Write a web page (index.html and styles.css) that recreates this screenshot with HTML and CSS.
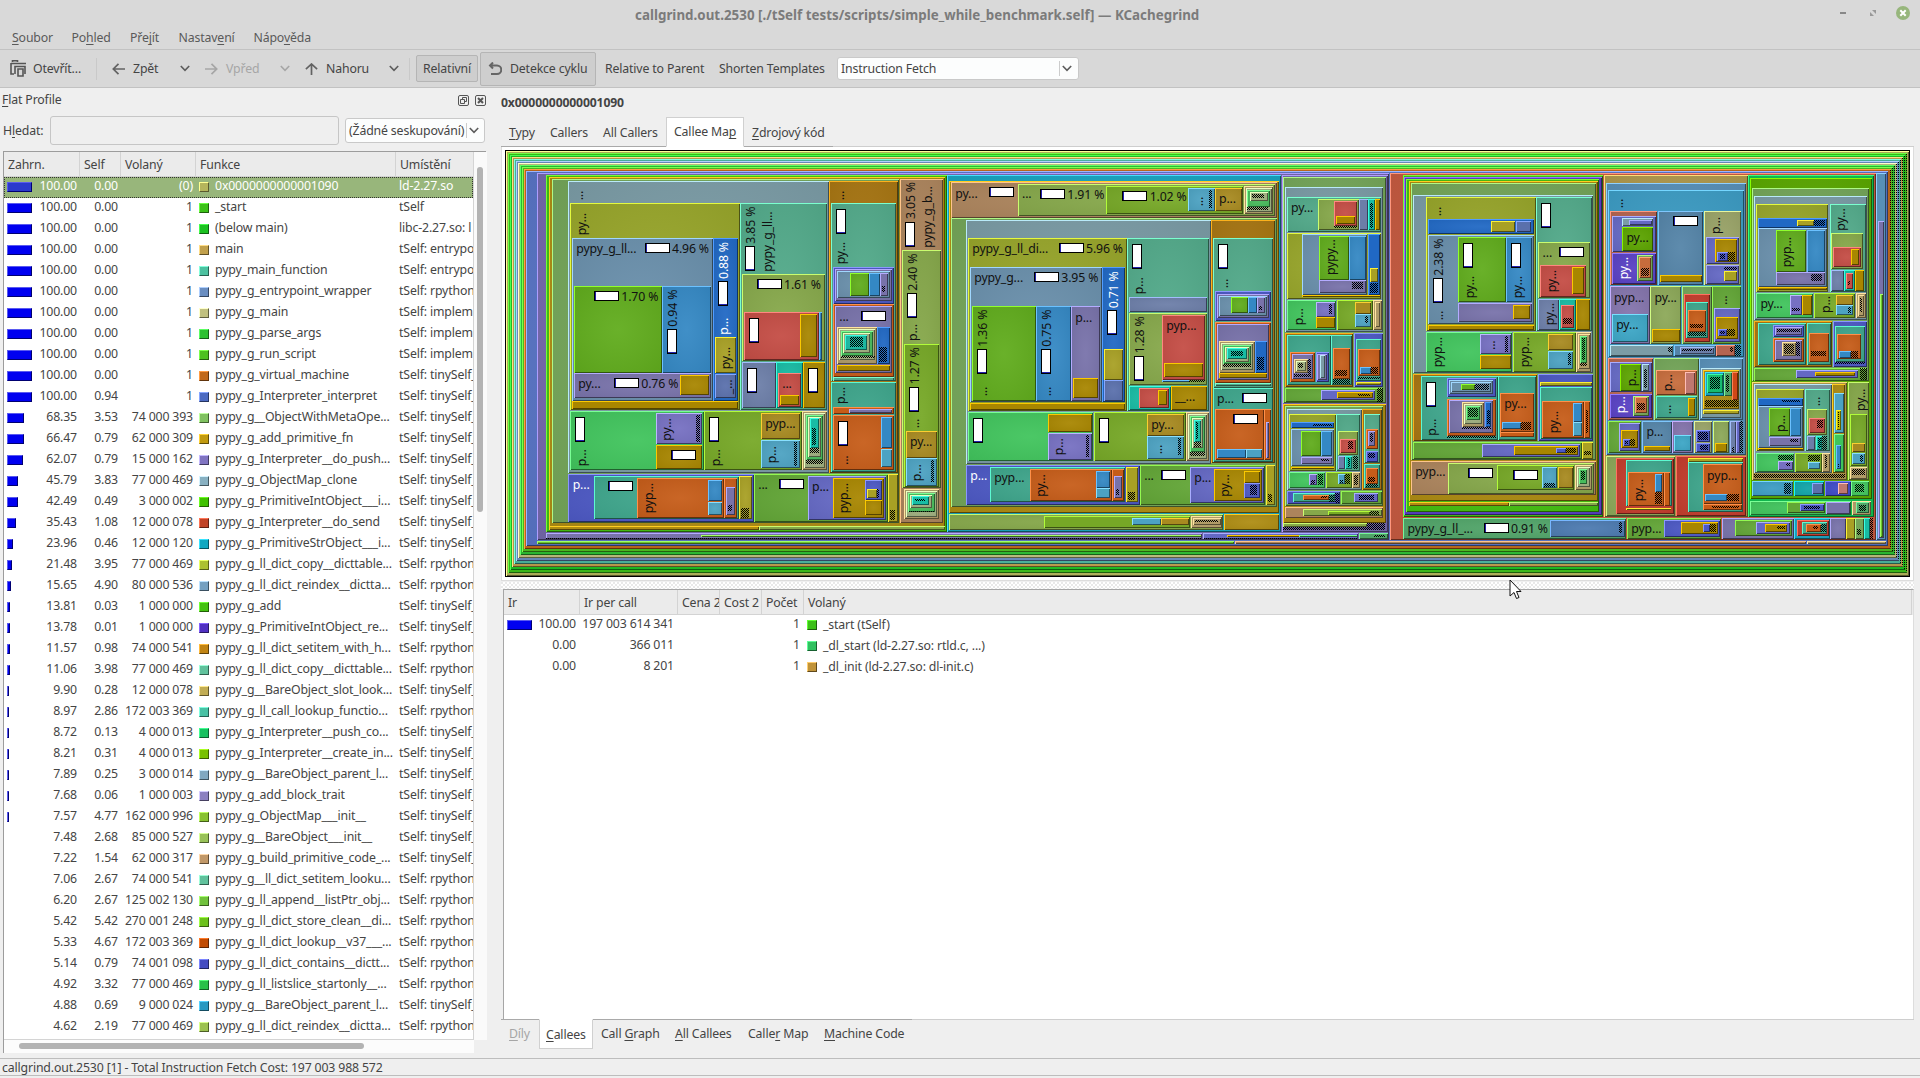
FILE: index.html
```html
<!DOCTYPE html>
<html lang="cs">
<head>
<meta charset="utf-8">
<title>callgrind.out.2530 — KCachegrind</title>
<link rel="stylesheet" href="styles.css">
</head>
<body>
<div class="window">
  <header class="titlebar">
    <h1>callgrind.out.2530 [./tSelf tests/scripts/simple_while_benchmark.self] — KCachegrind</h1>
    <svg class="controls" width="80" height="16" viewBox="0 0 80 16">
      <path d="M5 7h6v2H5z" fill="#888"/>
      <path d="M37 5h4v4zM35 7v4h4z" fill="#999"/>
      <circle cx="68" cy="8" r="7" fill="#97b67c"/>
      <path d="M65.300 5.300l5.400 5.400M70.700 5.300l-5.400 5.400" stroke="#fff" stroke-width="2"/>
    </svg>
  </header>
  <nav class="menubar">
    <span><u>S</u>oubor</span><span>Po<u>h</u>led</span><span>Pře<u>j</u>ít</span><span>Nastav<u>e</u>ní</span><span>Nápo<u>v</u>ěda</span>
  </nav>
  <div class="toolbar">
    <span class="tool open"><svg width="17" height="17" viewBox="0 0 17 17" fill="none" stroke="#555"><path d="M2.500 2V.8h5V2M1 3.500h15M1 3v11h3" stroke-width="1.600"/><path d="M5 14V6.500h10V14" stroke-width="1.600"/><path d="M8 9h5v7H8z" stroke-width="1.600"/></svg>Otevřít...</span>
    <i class="sep"></i>
    <span class="tool back"><svg width="13" height="12" viewBox="0 0 13 12"><path d="M6.500 .8L1.300 6l5.200 5.200M1.500 6H13"/></svg>Zpět</span>
    <svg class="chev c1" width="10" height="7" viewBox="0 0 10 7"><path d="M.8 1L5 5.400 9.200 1"/></svg>
    <span class="tool fwd"><svg width="13" height="12" viewBox="0 0 13 12"><path d="M6.500 .8L11.700 6l-5.200 5.200M0 6h11.500"/></svg>Vpřed</span>
    <svg class="chev c2" width="10" height="7" viewBox="0 0 10 7"><path d="M.8 1L5 5.400 9.200 1"/></svg>
    <span class="tool up"><svg width="13" height="12" viewBox="0 0 13 12"><path d="M.9 6.200L6.500 1l5.600 5.200M6.500 1.200V12"/></svg>Nahoru</span>
    <svg class="chev c3" width="10" height="7" viewBox="0 0 10 7"><path d="M.8 1L5 5.400 9.200 1"/></svg>
    <i class="sep"></i>
    <span class="btn rel">Relativní</span>
    <span class="btn cycle"><svg width="14" height="14" viewBox="0 0 14 14" fill="none" stroke="#666" stroke-width="2"><path d="M2 3.500h7a4.200 4.200 0 0 1 0 8.500H3M5 .5L2 3.500l3 3"/></svg>Detekce cyklu</span>
    <span class="tool parent">Relative to Parent</span>
    <span class="tool shorten">Shorten Templates</span>
    <span class="combo event"><b>Instruction Fetch</b><svg class="chev" width="10" height="7" viewBox="0 0 10 7"><path d="M.8 1L5 5.400 9.200 1"/></svg></span>
  </div>
  <main class="body">
    <aside class="dock">
      <div class="dock-title"><span><u>F</u>lat Profile</span>
        <svg width="28" height="11" viewBox="0 0 28 11" fill="none" stroke="#555"><rect x=".5" y=".5" width="10" height="10" rx="1.500"/><path d="M4.500 4.500V2.500h4v4h-2M2.500 4.500h4v4h-4z"/><rect x="17.500" y=".5" width="10" height="10" rx="1.500"/><path d="M20 3l5 5M25 3l-5 5" stroke-width="2"/></svg>
      </div>
      <div class="search"><label>H<u>l</u>edat:</label><span class="input"></span><span class="combo group"><b>(Žádné seskupování)</b><svg class="chev" width="10" height="7" viewBox="0 0 10 7"><path d="M.8 1L5 5.400 9.200 1"/></svg></span></div>
      <div class="profile">
        <div class="list">
          <div class="row head"><span>Zahrn.</span><span>Self</span><span>Volaný</span><span>Funkce</span><span>Umístění</span></div>
          <div id="functions"></div>
        </div>
        <div class="vscroll"><i></i></div>
        <div class="hscroll"><i></i></div>
        <div class="corner"></div>
      </div>
    </aside>
    <section class="detail">
      <h2>0x0000000000001090</h2>
      <div class="tabs top"><span class="t1"><u>T</u>ypy</span><span class="t2">Callers</span><span class="t3">All Callers</span><span class="t4 active">Callee Ma<u>p</u></span><span class="t5"><u>Z</u>drojový kód</span></div>
      <div class="mapframe"><svg id="map" width="1405" height="427" viewBox="505 150 1405 427"></svg></div>
      <div class="splitter"></div>
      <div class="callees">
        <div class="crow chead"><span>Ir</span><span>Ir per call</span><span>Cena 2</span><span>Cost 2</span><span>Počet</span><span>Volaný</span></div>
        <div class="crow"><span class="num"><i class="bar w25"></i>100.00</span><span class="num">197 003 614 341</span><span></span><span></span><span class="num">1</span><span class="fn"><i class="sw s1"></i>_start (tSelf)</span></div>
        <div class="crow"><span class="num">0.00</span><span class="num">366 011</span><span></span><span></span><span class="num">1</span><span class="fn"><i class="sw s2"></i>_dl_start (ld-2.27.so: rtld.c, ...)</span></div>
        <div class="crow"><span class="num">0.00</span><span class="num">8 201</span><span></span><span></span><span class="num">1</span><span class="fn"><i class="sw s3"></i>_dl_init (ld-2.27.so: dl-init.c)</span></div>
      </div>
      <div class="tabs bottom"><span class="b1"><u>D</u>íly</span><span class="b2 active"><u>C</u>allees</span><span class="b3">Call <u>G</u>raph</span><span class="b4"><u>A</u>ll Callees</span><span class="b5">Calle<u>r</u> Map</span><span class="b6"><u>M</u>achine Code</span></div>
    </section>
  </main>
  <footer class="status">callgrind.out.2530 [1] - Total Instruction Fetch Cost: 197 003 988 572</footer>
  <svg class="pointer" width="13" height="21" viewBox="0 0 13 21"><path d="M1 1v16l4-3.500 2.500 6 2.500-1-2.500-6H12z" fill="#fff" stroke="#111"/></svg>
</div>
<script src="script.js"></script>
</body>
</html>
```
FILE: styles.css
```css
* { box-sizing: border-box; }
body { margin: 0; background: #efefef; color: #444; font: 12.3px/18px "Noto Sans", sans-serif; letter-spacing: -.15px; overflow: hidden; }
u { text-decoration: underline; text-underline-offset: 2px; text-decoration-thickness: 1px; text-decoration-skip-ink: none; }
.window { position: relative; width: 1920px; height: 1078px; display: flex; flex-direction: column; }
.titlebar { height: 28px; background: #d9d9d9; display: flex; align-items: center; padding-left: 635px; }
.titlebar h1 { margin: 2px 0 0; font-size: 13.33px; font-weight: 700; line-height: 18px; letter-spacing: .03px; color: #7b7b7b; white-space: nowrap; }
.controls { margin: 0 5px 2px auto; }
.menubar { height: 22px; background: #d9d9d9; border-bottom: 1px solid #c2c2c2; display: grid; grid-template-columns: 59.5px 58.5px 48.5px 75px 80px; padding: 1px 0 0 12px; color: #5a5a5a; }
.toolbar { height: 38px; background: #d8d8d8; border-bottom: 1px solid #c2c2c2; display: flex; align-items: center; white-space: nowrap; }
.toolbar > * { flex: none; }
.tool, .btn { display: flex; align-items: center; }
.tool svg, .btn svg { flex: none; }
.open { width: 96px; padding-left: 10px; gap: 6px; }
.sep { width: 1px; height: 22px; background: #c9c9c9; }
.back { width: 83px; padding-left: 15px; gap: 8px; }
.fwd { width: 75px; margin-left: 15px; gap: 8px; color: #a6a6a6; }
.up { width: 84px; margin-left: 15px; gap: 8px; }
.back path, .up path, .fwd path { fill: none; stroke: #636363; stroke-width: 1.700; }
.fwd path, .c2 path { stroke: #a6a6a6 !important; }
.chev path { fill: none; stroke: #5c5c5c; stroke-width: 1.600; }
.c3 { margin-right: 10px; }
.btn { background: #cecece; border: 1px solid #b5b5b5; border-radius: 2px; }
.rel { width: 62px; height: 27px; margin-left: 6px; justify-content: center; }
.cycle { width: 116px; height: 34px; margin-left: 2px; padding-left: 7px; gap: 8px; }
.parent { width: 114px; margin-left: 9px; }
.shorten { width: 118px; }
.combo { display: flex; align-items: center; justify-content: space-between; background: #fcfdfd; border: 1px solid #c9c9c9; border-radius: 3px; padding: 0 6px 0 3px; white-space: nowrap; }
.combo b { font-weight: 400; }
.combo .chev { flex: none; box-sizing: content-box; border-left: 1px solid #ccc; padding: 4px 0 4px 2px; }
.event { width: 242px; height: 23px; }
.body { height: 970px; display: flex; }
.dock { width: 486px; flex: none; }
.dock-title { height: 24px; display: flex; align-items: center; justify-content: space-between; padding: 0 0 0 2px; }
.dock-title svg { margin-top: 1px; }
.search { height: 39px; display: flex; align-items: center; padding: 0 0 2px 3px; }
.search label { width: 47px; }
.input { width: 289px; height: 29px; border: 1px solid #c6c6c6; border-radius: 3px; margin-right: 6px; }
.group { width: 140px; height: 25px; padding: 0 5px 0 3px; }
.profile { width: 483px; height: 902px; margin-left: 3px; display: grid; grid-template: 888px 13px / 470px 13px; border-top: 1px solid #9c9c9c; border-left: 1px solid #9c9c9c; }
.list { background: #fff; overflow: hidden; border-bottom: 1px solid #d4d4d4; border-right: 1px solid #d4d4d4; }
.row { display: grid; grid-template-columns: 76px 41px 75px 200px 78px; height: 21px; line-height: 17px; white-space: nowrap; }
.row > span { overflow: hidden; height: 21px; }
.head.row, .head.row > span { height: 25px; background: #ebebeb; }
.head > span { border-right: 1px solid #d3d3d3; border-bottom: 1px solid #d3d3d3; padding: 4px 0 0 4px; }
.num { position: relative; text-align: right; padding-right: 3px; }
.bar { position: absolute; left: 3px; top: 5px; height: 10px; background: #0000f0; border: 1px solid; border-color: #5a5af0 #000070 #000070 #5a5af0; }
.w25 { width: 25px; }
.fn { display: flex; }
.sw { flex: none; width: 10px; height: 10px; margin: 5px 6px 0 3px; border: 1px solid; }
.loc { padding-left: 3px; }
.selected { background: #98b67b; color: #fff; outline: 1px dotted #333; outline-offset: -1px; }
.selected .bar { background: #2b39cc; }
.vscroll { background: #fafafa; padding: 15px 0 0 3px; }
.vscroll i { display: block; width: 6px; height: 345px; border-radius: 3px; background: #b3b3b3; }
.hscroll { background: #fcfcfc; padding: 3px 0 0 15px; }
.hscroll i { display: block; width: 345px; height: 6px; border-radius: 3px; background: #b3b3b3; }
.corner { background: #efefef; }
.detail { margin-left: 15px; width: 1413px; }
.detail h2 { margin: 0; height: 29px; padding-top: 6px; font-size: 12.200px; line-height: 18px; }
.tabs { display: flex; white-space: nowrap; }
.tabs > span { flex: none; }
.top { height: 30px; border-bottom: 1px solid #cecece; }
.top > span { height: 30px; padding: 7px 0 0 8px; border-bottom: 1px solid #a9a9a9; }
.t1 { width: 41px; } .t2 { width: 53px; } .t3 { width: 71px; } .t4 { width: 78px; } .t5 { width: 89px; }
.top .active { background: #fff; border: 1px solid #d0d0d0; border-bottom-color: #fff; padding: 5px 0 0 7px; }
.mapframe { height: 434px; background: #fff; border: 1px solid #dcdcdc; border-top: 0; padding: 3px 0 0 3px; }
.mapframe svg { display: block; }
.splitter { height: 8px; background: repeating-conic-gradient(#fff 0 25%, #e9e9e9 0 50%) 0 0/4px 4px; border-top: 1px solid #efefef; }
.callees { height: 431px; margin-left: 2px; background: #fff; border: 1px solid #a6a6a6; border-right-color: #ddd; border-bottom: 0; padding: 0; }
.crow { display: grid; grid-template-columns: 76px 98px 42px 42px 42px 1108px; height: 21px; white-space: nowrap; }
.crow .num { padding-right: 4px; }
.chead { background: #ebebeb; height: 25px; }
.chead span { padding: 4px 0 0 4px; border-right: 1px solid #d3d3d3; border-bottom: 1px solid #d3d3d3; overflow: hidden; }
.crow .fn { padding-top: 1px; }
.crow .sw { margin-top: 4px; }
.s1 { background: #3cc118; border-color: #62ff35 #1e600c #1e600c #62ff35; }
.s2 { background: #30c160; border-color: #60ff98 #186030 #186030 #60ff98; }
.s3 { background: #c1943a; border-color: #ffce70 #60491c #60491c #ffce70; }
.bottom { height: 38px; margin-top: -1px; border-top: 1px solid #cecece; }
.bottom > span { height: 29px; padding: 5px 0 0 8px; margin-top: -1px; border-top: 1px solid #a9a9a9; }
.b1 { width: 38px; color: #a6a6a6; } .b2 { width: 54px; } .b3 { width: 74px; } .b4 { width: 73px; } .b5 { width: 76px; } .b6 { width: 96px; }
.bottom .active { background: #fff; border: 1px solid #d0d0d0; border-top: 1px solid #fff; padding: 6px 0 0 6px; height: 30px; }
.status { height: 20px; line-height: 17px; border-top: 1px solid #bdbdbd; box-shadow: inset 0 -2px #efefef, inset 0 -3px #bdbdbd; padding: 0 2px; background: #efefef; }
.pointer { position: absolute; left: 1509px; top: 579px; }
.edge { fill: none; stroke-width: 1; }
.cell, .cell-shade, .edge, .meter, .meter-value { shape-rendering: crispEdges; }
.label { font: 12.3px "Noto Sans", sans-serif; letter-spacing: -.15px; fill: #111; }
.label.light { fill: #fff; }
.meter { fill: #fff; stroke: #000; }
.meter-value { fill: #2222b0; }
```
FILE: script.js
```javascript
// Bevel colours follow QColor::lighter(150) and QColor::darker(200).
function bevel(hex) {
  const c = [1, 3, 5].map(i => parseInt(hex.slice(i, i + 2), 16));
  const v = Math.max(...c), m = Math.min(...c);
  let s = v ? (v - m) / v : 0, nv = v * 1.5;
  const s0 = s;
  if (nv > 255) { s = Math.max(0, s - (nv - 255) / 255); nv = 255; }
  const light = c.map(x => Math.round(nv * (1 - (s0 ? (1 - x / v) / s0 * s : 0))));
  return ['rgb(' + light + ')', 'rgb(' + c.map(x => x >> 1) + ')'];
}

// inclusive, self, calls, colour, name, location
const rows = `100.00|0.00|(0)|#b5b55c|0x0000000000001090|ld-2.27.so
100.00|0.00|1|#3cc118|_start|tSelf
100.00|0.00|1|#1cc121|(below main)|libc-2.27.so: l
100.00|0.00|1|#c1a04c|main|tSelf: entrypoi
100.00|0.00|1|#4cc1a0|pypy_main_function|tSelf: entrypoi
100.00|0.00|1|#6a8ec1|pypy_g_entrypoint_wrapper|tSelf: rpython_
100.00|0.00|1|#c1c180|pypy_g_main|tSelf: impleme
100.00|0.00|1|#2cc132|pypy_g_parse_args|tSelf: impleme
100.00|0.00|1|#4cc120|pypy_g_run_script|tSelf: impleme
100.00|0.00|1|#c1681a|pypy_g_virtual_machine|tSelf: tinySelf_
100.00|0.94|1|#4c6ac1|pypy_g_Interpreter_interpret|tSelf: tinySelf_
68.35|3.53|74 000 393|#80c160|pypy_g__ObjectWithMetaOpe...|tSelf: tinySelf_
66.47|0.79|62 000 309|#c19a10|pypy_g_add_primitive_fn|tSelf: tinySelf_
62.07|0.79|15 000 162|#8074c1|pypy_g_Interpreter__do_push...|tSelf: tinySelf_
45.79|3.83|77 000 469|#88b0c1|pypy_g_ObjectMap_clone|tSelf: tinySelf_
42.49|0.49|3 000 002|#40c100|pypy_g_PrimitiveIntObject___i...|tSelf: tinySelf_
35.43|1.08|12 000 078|#c14428|pypy_g_Interpreter__do_send|tSelf: tinySelf_
23.96|0.46|12 000 120|#10a8c1|pypy_g_PrimitiveStrObject___i...|tSelf: tinySelf_
21.48|3.95|77 000 469|#acc130|pypy_g_ll_dict_copy__dicttable...|tSelf: rpython_
15.65|4.90|80 000 536|#74a0c1|pypy_g_ll_dict_reindex__dictta...|tSelf: rpython_
13.81|0.03|1 000 000|#44c110|pypy_g_add|tSelf: tinySelf_
13.78|0.01|1 000 000|#5030c1|pypy_g_PrimitiveIntObject_re...|tSelf: tinySelf_
11.57|0.98|74 000 541|#c18414|pypy_g_ll_dict_setitem_with_h...|tSelf: rpython_
11.06|3.98|77 000 469|#60c19c|pypy_g_ll_dict_copy__dicttable...|tSelf: rpython_
9.90|0.28|12 000 078|#c1ac54|pypy_g__BareObject_slot_look...|tSelf: tinySelf_
8.97|2.86|172 003 369|#48c1a4|pypy_g_ll_call_lookup_functio...|tSelf: rpython_
8.72|0.13|4 000 013|#18c160|pypy_g_Interpreter__push_co...|tSelf: tinySelf_
8.21|0.31|4 000 013|#78c100|pypy_g_Interpreter__create_in...|tSelf: tinySelf_
7.89|0.25|3 000 014|#80a8c1|pypy_g__BareObject_parent_l...|tSelf: tinySelf_
7.68|0.06|1 000 003|#8c80c1|pypy_g_add_block_trait|tSelf: tinySelf_
7.57|4.77|162 000 996|#88c130|pypy_g_ObjectMap___init__|tSelf: tinySelf_
7.48|2.68|85 000 527|#98c158|pypy_g__BareObject___init__|tSelf: tinySelf_
7.22|1.54|62 000 317|#c19868|pypy_g_build_primitive_code_...|tSelf: tinySelf_
7.06|2.67|74 000 541|#60c19c|pypy_g__ll_dict_setitem_looku...|tSelf: rpython_
6.20|2.67|125 002 130|#70c13c|pypy_g_ll_append__listPtr_obj...|tSelf: rpython_
5.42|5.42|270 001 248|#6cc11c|pypy_g_ll_dict_store_clean__di...|tSelf: rpython_
5.33|4.67|172 003 369|#c14c04|pypy_g_ll_dict_lookup__v37___...|tSelf: rpython_
5.14|0.79|74 001 098|#444cc1|pypy_g_ll_dict_contains__dictt...|tSelf: rpython_
4.92|3.32|77 000 469|#28c148|pypy_g_ll_listslice_startonly__...|tSelf: rpython_
4.88|0.69|9 000 024|#2898c1|pypy_g__BareObject_parent_l...|tSelf: tinySelf_
4.62|2.19|77 000 469|#9cc150|pypy_g_ll_dict_reindex__dictta...|tSelf: rpython_`.split('\n');

document.getElementById('functions').innerHTML = rows.map((line, i) => {
  const [incl, self, calls, color, name, loc] = line.split('|');
  const [hi, lo] = bevel(color);
  const w = incl < 7.5 ? 0 : Math.max(2, Math.round(incl / 4));
  return `<div class="row${i ? '' : ' selected'}"><span class="num">${w ? `<i class="bar" style="width:${w}px"></i>` : ''}${incl}</span>` +
    `<span class="num">${self}</span><span class="num">${calls}</span>` +
    `<span class="fn"><i class="sw" style="background:${color};border-color:${hi} ${lo} ${lo} ${hi}"></i>${name}</span><span class="loc">${loc}</span></div>`;
}).join('');

// One colour per function in the call tree.
const palette = {
  g: '#74a659', s: '#7b9ca6', o: '#98a62a', b: '#6a90ac', G: '#60ac1c', B: '#3488c4', P: '#7872aa', y: '#a88600',
  D: '#2068c4', Y: '#a8a024', I: '#5a70ac', t: '#52aa8a', l: '#86a84a', R: '#c44c44', n: '#6c7ea8', c: '#18bca4',
  m: '#a87612', f: '#40c45c', v: '#7670c2', h: '#76a826', k: '#a88a20', a: '#4ca2c2', w: '#b09c68', W: '#48bc5c',
  S: '#a0b080', r: '#c65c18', p: '#4c58c4', q: '#3ea68c', u: '#62a636', x: '#6468c4', z: '#ac845c', i: '#5874c6',
  Q: '#7468ac', e: '#44c010', j: '#ae8c12', C: '#18a4c0', M: '#c65a40', V: '#5840c4', E: '#50a468', F: '#4c7ab0',
  X: '#c43c2c', K: '#b0984c', H: '#5890b8', L: '#3c9cc4', N: '#b46450', O: '#5ca400', U: '#c66c3c', A: '#5484a8',
  J: '#9aa468', Z: '#8474ac', T: '#3ca6c6', d: '#8ca858', '1': '#c07870', '2': '#10c070', '3': '#d04818',
  '4': '#10c050', '5': '#5aa800', '6': '#c0b800', '7': '#10a4a8', '8': '#3c48c6', '9': '#6cc430'
};

// Each block of the map has its own origin and unit; "#" is a region too small to subdivide.
const blocks = [
  { ox: 500, sx: 3, cells: `
78 78 4164 1203 i;111 84 2668 1186 Q;111 1188 2203 1197 9;2205 1188 3918 1197 z;3920 1188 4158 1197 w;
138 90 1341 1161 e;147 96 1335 1155 j;156 102 1197 1135 g;1200 102 1329 1135 z;147 1143 777 1155 j;777 1143 1334 1155 l;
138 1164 2107 1182 P;603 1170 2104 1176 9;138 1179 2107 1182 #;
204 108 987 985 s;210 174 719 796 o;216 280 638 767 b;222 423 486 683 G;486 423 632 683 B;222 685 632 759 P;540 690 628 750 y;
639 280 714 767 D;645 576 707 685 Y;645 687 707 759 I;216 768 714 793 y;
720 174 980 796 t;726 388 974 648 l;732 502 957 645 R;900 507 952 637 y;957 502 966 645 B;726 651 827 790 n;828 651 908 790 c;834 685 903 786 R;840 750 898 780 y;909 651 974 790 y;
210 798 611 976 f;468 804 605 898 v;588 810 600 892 #;468 900 605 972 y;612 798 905 976 h;783 804 899 883 k;783 885 899 970 a;882 891 891 963 #;
906 798 982 976 w;912 804 976 970 S;918 810 969 945 W;924 816 964 935 S;930 820 957 908 c;936 848 948 900 #;930 910 957 924 #;918 945 969 957 #;
988 108 1195 985 m;994 174 1188 709 t;1000 366 1182 476 p;1006 373 1176 469 P;1010 378 1170 460 b;1050 384 1106 452 G;1107 384 1140 452 B;1140 384 1164 454 P;1146 423 1155 440 #;
1000 478 1182 695 r;1006 484 1176 684 P;1010 546 1131 658 w;1016 552 1125 645 S;1022 558 1118 633 W;1028 564 1111 625 S;1034 570 1101 615 c;1050 576 1090 606 #;1022 633 1124 640 #;1131 546 1170 658 D;1137 606 1161 651 #;1010 660 1170 678 y;1000 696 1182 707 t;
994 711 1188 981 q;1000 786 1182 808 r;1047 792 1176 804 P;1000 810 1182 975 r;1143 816 1176 910 B;1143 912 1176 967 a;
204 988 761 1131 p;282 994 716 1123 q;411 1000 671 1118 r;624 1006 667 1069 B;624 1071 667 1110 a;672 1000 711 1118 r;678 1025 705 1110 P;684 1080 695 1098 #;717 994 756 1123 Y;723 1089 747 1120 #;
762 988 1163 1131 u;924 994 1158 1124 x;1000 1000 1153 1118 y;1095 1006 1147 1065 p;1101 1032 1132 1058 Y;1132 1032 1138 1058 #;1095 1066 1147 1110 y;1164 988 1195 1131 Y;1170 1095 1186 1125 #;
1206 316 1323 1030 l;1212 597 1317 1026 h;1218 858 1311 938 k;1218 940 1311 1023 a;1293 945 1303 1012 #;1212 1033 1317 1123 w;1218 1039 1311 1115 S;1224 1044 1305 1100 W;1230 1050 1296 1090 S;1236 1054 1287 1080 c;1244 1062 1276 1068 #;1224 1098 1305 1102 #` },
  { ox: 900, sx: 3, cells: `
909 1164 1375 1182 x;980 1170 1196 1176 y;1196 1170 1371 1176 f;909 1179 1375 1182 #;1377 1164 1464 1182 E;1422 1170 1455 1177 #;
142 90 1142 1161 C;147 108 1137 1105 j;153 111 1130 218 z;354 118 1125 212 l;618 124 1030 207 h;864 130 944 198 a;927 136 936 190 #;945 130 1027 198 k;1032 124 1120 207 w;1037 130 1115 200 S;1042 135 1110 187 W;1050 141 1104 168 S;1056 147 1092 160 #;1042 187 1105 194 #;
153 220 1130 1087 g;198 226 932 958 s;204 280 680 798 o;210 366 605 771 b;216 484 407 767 G;408 484 512 767 B;513 484 600 767 P;519 699 594 760 y;606 366 674 771 D;612 612 668 705 Y;612 706 668 767 I;210 774 674 795 y;
681 280 926 798 t;687 457 920 502 n;687 505 920 721 l;786 510 915 705 R;792 654 909 696 y;786 706 866 712 B;866 706 915 712 #;687 723 812 794 c;717 730 806 789 R;774 735 800 780 y;813 723 920 794 y;
204 801 579 949 f;444 807 576 862 y;444 864 576 944 v;558 870 567 936 #;582 801 857 949 h;741 807 851 872 k;741 873 851 941 a;834 879 843 930 #;858 801 927 949 w;864 807 921 943 S;870 813 915 920 W;876 819 909 910 S;882 824 903 890 c;888 830 895 882 #;882 892 903 906 #;870 920 915 932 #;
933 226 1125 955 m;939 280 1118 728 t;945 438 1112 528 p;950 446 1106 520 P;957 452 1100 512 b;993 456 1043 505 G;1043 456 1070 505 B;1070 456 1094 505 P;1076 482 1086 494 #;
945 532 1112 713 r;950 538 1106 705 P;957 588 1064 684 w;962 594 1058 675 S;968 600 1052 658 W;974 605 1046 650 S;980 610 1040 643 c;992 617 1028 634 #;968 658 1052 665 #;1064 588 1100 684 D;1071 636 1092 676 #;957 684 1100 700 y;945 714 1112 724 t;
939 730 1118 951 q;945 792 1091 945 r;950 912 1037 938 B;1037 912 1085 938 a;1091 792 1112 945 r;1097 831 1107 938 P;
198 960 719 1079 p;270 966 676 1072 q;390 972 635 1067 r;588 978 629 1030 B;588 1030 629 1060 a;636 972 671 1067 r;641 992 665 1060 P;648 1032 657 1050 #;677 966 713 1072 Y;683 1041 705 1064 #;
720 960 1096 1079 u;870 966 1092 1073 x;942 972 1086 1067 y;1032 978 1080 1013 y;1032 1013 1080 1058 p;1050 1020 1072 1050 #;1097 960 1125 1079 Y;1103 1046 1116 1070 #;
147 1107 970 1155 l;432 1113 870 1148 h;696 1119 782 1140 a;782 1119 868 1140 k;873 1113 966 1148 w;880 1118 962 1140 w;886 1125 954 1130 #;972 1107 1137 1155 j;
1145 90 1464 1161 Q;1149 96 1458 774 g;1155 127 1449 560 s;1161 156 1443 260 t;1254 162 1377 255 l;1302 168 1371 242 R;1308 212 1364 237 y;1302 242 1371 250 #;1377 162 1403 255 n;1403 162 1424 255 c;1409 175 1418 248 #;1424 162 1440 255 y;
1161 263 1443 463 o;1206 268 1400 450 b;1257 274 1346 404 G;1346 274 1397 404 B;1257 406 1397 444 P;1356 411 1389 433 #;1403 268 1440 450 D;1409 370 1433 412 Y;1409 414 1433 445 #;1206 450 1440 456 y;
1161 465 1309 554 f;1248 471 1304 515 v;1287 477 1296 508 #;1248 515 1304 548 y;1312 465 1418 554 h;1365 471 1412 507 k;1365 507 1412 545 a;1395 513 1404 535 #;1418 465 1446 554 w;1424 472 1441 545 w;
1155 564 1360 727 m;1161 570 1292 720 q;1170 620 1246 712 r;1176 626 1240 703 P;1182 642 1224 685 w;1188 648 1218 677 S;1193 654 1210 670 #;1224 642 1233 695 #;1182 686 1233 695 #;1248 620 1286 712 p;1252 626 1280 706 P;1260 630 1275 698 s;1294 570 1356 720 q;1300 609 1350 703 r;1305 675 1342 692 #;1300 703 1350 716 #;
1362 564 1450 727 p;1368 582 1443 708 q;1373 612 1440 694 r;1380 666 1412 687 B;1412 666 1433 687 #;1373 695 1440 702 #;1368 710 1443 720 Y;
1155 730 1449 771 u;1264 736 1425 764 x;1311 741 1418 758 y;1374 747 1410 753 #;1430 730 1449 771 #;
1149 777 1458 1133 j;1155 784 1449 1084 g;1161 793 1385 1034 s;1167 807 1307 979 o;1173 831 1302 850 D;1240 836 1295 842 #;1173 853 1302 964 b;1203 858 1262 934 G;1262 858 1295 934 B;1203 936 1295 957 P;1262 942 1286 948 #;1173 965 1302 973 y;
1308 807 1380 979 t;1314 858 1374 930 l;1320 882 1368 924 R;1344 887 1360 912 #;1314 933 1336 973 n;1336 933 1357 973 c;1343 938 1351 965 #;1359 933 1373 973 #;
1167 982 1276 1028 f;1227 988 1252 1021 v;1233 1004 1245 1016 #;1254 988 1270 1021 #;1278 982 1356 1028 h;1313 988 1334 1018 a;1320 1004 1329 1013 #;1334 988 1350 1018 #;1357 982 1379 1028 w;1363 990 1373 1020 #;
1386 793 1446 1034 m;1391 807 1440 955 t;1397 853 1433 913 r;1404 858 1425 903 P;1409 865 1419 892 #;1397 917 1433 950 p;1404 923 1425 940 #;1391 958 1440 1030 q;1397 970 1433 1018 r;1404 997 1425 1010 #;1397 1018 1433 1026 #;
1161 1038 1321 1078 p;1179 1044 1304 1071 q;1209 1050 1286 1066 r;1262 1054 1280 1060 #;1288 1050 1302 1071 #;1304 1044 1316 1075 #;1324 1038 1446 1078 u;1362 1044 1434 1072 x;1377 1050 1422 1066 #;
1155 1087 1449 1119 z;1209 1092 1446 1113 l;1284 1098 1410 1109 h;1410 1098 1438 1109 #;1149 1134 1400 1145 l;1400 1134 1456 1146 #;1149 1147 1456 1156 #` },
  { ox: 1370, sx: 1568 / 550, cells: `
57 84 1443 1186 M;93 90 665 1115 e;98 96 660 1109 V;104 102 654 1101 e;110 108 650 1068 j;110 1071 395 1082 j;395 1071 650 1082 l;117 114 643 945 g;
123 150 637 685 s;160 156 472 558 o;166 222 467 268 D;345 228 413 262 Y;415 228 460 262 I;166 270 467 537 b;250 276 388 471 G;388 276 461 471 B;250 474 461 531 P;408 479 455 522 y;166 540 467 555 y;
474 156 632 558 t;480 292 626 459 l;486 360 616 455 R;576 366 610 447 y;480 462 540 554 n;540 462 586 554 c;545 480 581 548 R;549 520 575 538 #;586 462 626 554 y;
160 562 406 680 f;314 568 401 628 v;384 573 393 620 #;314 630 401 671 y;409 562 586 680 h;507 568 580 616 k;507 618 580 671 a;564 624 573 660 #;586 562 631 680 w;592 568 626 671 w;598 573 620 655 W;604 580 614 645 #;598 655 620 663 #;
123 687 477 888 m;145 693 364 884 q;220 699 358 757 p;226 705 352 748 b;232 712 346 740 b;260 717 298 734 G;298 717 340 734 #;220 761 358 872 r;226 766 352 863 P;262 772 326 846 w;268 778 320 838 S;274 784 314 826 W;280 790 308 816 #;262 846 346 852 #;327 772 346 846 D;333 795 341 836 #;220 872 358 878 #;
366 693 473 884 q;371 744 467 861 r;376 832 430 853 B;430 832 460 855 #;371 861 467 876 r;479 687 637 888 p;485 711 632 724 Y;485 727 632 883 q;490 768 610 878 r;579 774 604 832 B;579 832 604 872 a;610 768 627 878 r;615 795 621 865 #;
123 892 604 942 u;319 898 598 936 x;411 903 592 930 y;530 908 560 924 p;560 908 586 924 #;604 892 637 942 Y;610 918 630 930 #;
117 949 643 1050 z;222 955 640 1046 l;363 960 583 1035 h;490 966 534 1030 a;497 1014 526 1026 #;536 966 579 1030 k;585 960 634 1035 w;590 966 628 1025 S;596 971 620 1016 W;601 978 614 1005 #;
93 1120 731 1181 E;513 1126 726 1175 F;709 1131 718 1165 #;733 1120 1002 1181 u;838 1126 998 1175 p;887 1131 992 1168 y;950 1137 970 1162 p;970 1137 985 1162 #;
1004 1120 1208 1181 P;1042 1126 1203 1174 u;1100 1131 1197 1168 x;1126 1137 1190 1162 y;1160 1144 1183 1152 #;1210 1120 1312 1181 C;1218 1126 1308 1174 X;1232 1131 1302 1168 q;1244 1137 1286 1162 r;1264 1143 1278 1152 #;1286 1137 1300 1162 #;1312 1120 1356 1181 P;1356 1120 1382 1181 Y;1382 1120 1407 1181 g;1388 1153 1400 1170 #;1407 1120 1425 1181 c;1425 1120 1434 1181 #;
667 90 1077 1115 K;673 114 1071 930 H;679 135 1065 637 L;685 198 819 420 N;690 214 814 322 x;718 219 808 243 s;738 225 804 240 x;718 246 808 317 O;690 325 814 416 V;762 330 808 408 g;768 336 802 400 U;773 370 796 393 #;
822 198 950 420 A;827 390 946 412 y;952 198 1058 420 J;958 276 1053 357 x;984 282 1047 352 y;990 320 1020 348 p;998 327 1012 342 #;1020 320 1042 348 #;958 359 1053 416 x;1010 378 1047 408 Y;1010 366 1047 375 #;
685 423 798 597 Z;690 507 793 591 T;798 423 888 597 d;804 552 883 592 y;889 423 974 597 g;895 447 969 591 X;901 471 963 580 q;908 495 957 560 r;913 537 949 550 #;908 560 957 574 #;975 423 1058 597 u;981 490 1054 591 x;986 516 1048 583 y;992 552 1018 574 p;998 557 1012 566 #;1018 552 1042 574 #;
685 600 865 633 s;850 606 860 622 #;867 600 985 633 A;885 606 980 628 n;890 611 975 617 #;986 600 1042 633 N;1026 606 1036 622 #;1042 600 1058 633 #;
679 640 808 825 N;685 652 803 742 x;713 657 774 737 O;776 657 796 737 s;781 672 790 728 #;685 747 803 819 V;750 752 796 812 g;756 756 790 804 U;761 775 784 796 #;810 640 937 825 g;815 676 931 751 U;898 682 927 747 1;815 754 931 820 q;907 759 926 812 y;
939 640 1064 825 H;945 670 1058 819 s;950 676 1053 792 j;955 682 1010 752 C;962 688 1005 745 2;970 697 998 732 #;1010 682 1032 752 E;1015 690 1024 740 #;1032 682 1048 764 3;955 766 1048 785 #;950 794 1053 806 Y;
679 828 774 925 u;710 834 769 918 x;715 855 764 910 y;721 882 740 904 p;727 887 735 896 #;740 882 756 904 #;775 828 860 925 A;781 903 855 917 y;862 828 921 925 Z;867 870 916 919 T;924 828 976 925 J;930 855 970 892 p;936 861 964 886 #;930 894 970 920 p;940 899 964 914 #;979 828 1024 925 d;984 894 1019 920 y;1027 828 1043 925 n;1032 905 1038 920 #;1043 828 1055 925 x;1055 828 1062 925 #;
673 933 870 1112 d;702 940 866 1106 X;730 946 861 1084 q;735 981 838 1083 r;813 987 832 1042 B;813 1042 832 1077 #;839 981 855 1083 r;730 1088 858 1096 Y;871 933 1071 1112 X;908 940 1064 950 Y;908 951 1064 1101 q;950 958 1060 1077 r;956 1047 1017 1068 B;1017 1047 1052 1068 #;950 1078 1060 1095 r;975 1083 1052 1090 #;
1078 90 1437 1115 4;1083 99 1432 1063 5;1089 129 1424 708 g;1095 153 1418 525 s;1100 177 1307 441 o;1106 219 1303 249 D;1216 225 1266 243 Y;1266 225 1296 243 #;1106 250 1303 426 b;1157 255 1244 380 G;1245 255 1298 380 B;1157 382 1298 421 P;1257 387 1290 408 #;1106 426 1303 436 y;
1310 177 1413 441 t;1315 264 1406 372 l;1320 306 1400 367 R;1372 312 1393 359 y;1315 375 1350 438 n;1350 375 1382 438 c;1357 384 1377 432 R;1362 407 1369 420 #;1382 375 1407 438 y;
1100 444 1264 518 f;1197 450 1232 510 v;1203 490 1226 498 #;1233 450 1260 510 y;1267 444 1384 518 h;1329 450 1378 480 k;1329 480 1378 510 a;1362 486 1371 503 #;1385 444 1413 518 w;1391 450 1408 512 w;1396 460 1403 502 #;
1095 528 1318 665 m;1106 534 1244 660 q;1150 541 1238 576 p;1156 546 1232 570 P;1160 552 1225 560 #;1150 580 1238 652 r;1156 586 1232 644 P;1175 592 1214 634 w;1181 598 1208 626 #;1214 592 1225 634 #;1246 534 1314 660 q;1251 564 1308 650 r;1257 618 1300 632 #;1320 528 1418 665 p;1325 543 1412 650 q;1331 568 1400 642 r;1337 618 1372 638 B;1372 618 1392 638 #;1325 650 1412 656 #;
1095 670 1418 707 u;1214 676 1390 700 x;1268 681 1384 694 y;1397 670 1417 705 #;
1089 712 1360 1005 K;1095 718 1316 985 s;1100 732 1238 918 o;1106 759 1234 782 D;1175 765 1226 772 #;1106 784 1234 908 b;1138 789 1196 874 G;1198 789 1228 874 B;1138 877 1228 902 P;1197 883 1220 892 #;1106 909 1234 916 y;
1240 732 1312 918 t;1246 793 1304 870 l;1252 820 1298 865 R;1275 826 1292 850 #;1246 873 1270 916 n;1272 873 1290 916 c;1276 880 1286 908 #;1290 873 1303 916 #;1100 924 1210 980 f;1163 948 1205 974 v;1163 930 1205 945 #;1186 953 1197 964 #;1212 924 1290 980 h;1250 950 1284 971 a;1250 930 1284 947 #;1290 924 1310 980 w;1296 930 1304 970 #;1095 988 1355 998 #;
1318 718 1355 985 j;1323 744 1350 864 a;1328 795 1344 856 6;1333 802 1338 848 #;1323 867 1350 981 f;1328 900 1344 973 B;1333 955 1338 966 #;
1364 712 1424 1005 l;1369 807 1418 963 h;1374 893 1412 922 k;1374 924 1412 957 a;1396 930 1405 950 #;1369 966 1418 1002 w;1374 972 1410 990 #;
1089 1008 1207 1054 L;1180 1014 1200 1048 #;1209 1008 1295 1054 7;1260 1014 1292 1048 I;1298 1008 1370 1054 8;1334 1014 1364 1048 1;1372 1008 1424 1054 f;1384 1018 1408 1042 #;
1083 1067 1370 1110 f;1190 1072 1298 1104 u;1226 1078 1294 1099 p;1238 1083 1284 1092 #;1300 1072 1368 1106 P;1374 1067 1427 1110 w;1386 1072 1422 1105 E;1393 1079 1414 1098 #;
1443 84 1472 1186 H;1449 228 1466 1178 P;1454 447 1463 1176 9` }
];

// x, baseline, text; "v" is rotated a quarter turn and "w" is white.
const labels = [
  { ox: 500, sx: 3, t: `229 325 pypy_g_ll...;516 325 4.96 %;364 468 1.70 %;235 730 py...;424 730 0.76 %;852 433 1.61 %;796 850 pyp...;847 728 ...;1018 528 ...;775 1031 ...;936 1039 p...;1230 902 py...;218 1033 w p...;249 166 v ...;257 271 v py...;766 296 v 3.85 %;817 380 v pypy_g_ll...;1036 358 v py...;1032 166 v ...;1245 222 v 3.05 %;1297 308 v pypy_g_b...;1251 437 v 2.40 %;1251 588 v p...;1257 718 v 1.27 %;1257 850 v ...;531 545 v 0.94 %;684 402 vw 0.88 %;684 569 vw p...;690 673 v py...;695 748 v _...;258 964 v p...;514 887 v py...;659 964 v p...;829 955 v p...;1036 777 v p...;1043 960 v ...;458 1105 v pyp...;1043 1105 v pyp...;1263 1009 v p...` },
  { ox: 900, sx: 3, t: `166 158 py...;366 160 ...;502 163 1.91 %;749 169 1.02 %;957 175 p...;217 325 pypy_g_ll_di...;558 325 5.96 %;223 412 pypy_g...;484 412 3.95 %;526 530 p...;799 556 pyp...;825 768 __...;754 853 py...;951 775 p...;1173 202 py...;211 1006 w p...;283 1012 pyp...;733 1006 ...;883 1012 p...;908 184 v ...;262 605 v 1.36 %;262 754 v ...;454 605 v 0.75 %;454 754 v ...;653 490 vw 0.71 %;728 448 v p...;732 625 v 1.28 %;985 430 v ...;1305 390 v pypy...;490 931 v p...;787 928 v ...;436 1055 v py...;988 1055 v py...;1208 541 v p...` },
  { ox: 1370, sx: 1568 / 550, t: `107 1165 pypy_g_ll_...;402 1165 0.91 %;745 1165 pyp...;129 994 pyp...;383 790 py...;492 335 ...;731 292 py...;696 470 pyp...;811 470 py...;702 553 py...;788 874 p...;961 1004 pyp...;1113 489 py...;202 214 v ...;208 392 v 2.38 %;208 526 v ...;296 460 v py...;432 460 v py...;530 442 v py...;524 541 v py...;205 667 v pyp...;453 667 v pyp...;357 615 v ...;189 872 v p...;535 865 v py...;721 190 v ...;735 403 vw py...;998 267 v p...;1019 480 v ...;758 724 v p...;728 805 vw p...;861 739 v p...;857 808 v ...;779 1069 v py...;1201 367 v pyp...;1355 257 v py...;1312 504 v p...;1284 784 v ...;1183 861 v p...;1411 798 v py...` }
];

const meters = [
  { ox: 500, sx: 3, t: '435 294;282 438;342 699;771 403;513 916;1083 498;324 1008;837 1002;735 303 v;655 408 v;501 552 v;747 519 v;741 669 v;924 669 v;225 816 v;627 816 v;1008 192 v;1014 828 v;1215 231 v;1221 444 v;1227 726 v' },
  { ox: 900, sx: 3, t: '267 126;420 132;666 138;477 294;402 381;1026 744;999 807;783 975;231 612 v;423 612 v;621 495 v;696 297 v;702 633 v;954 297 v;219 819 v;597 819 v' },
  { ox: 1370, sx: 1568 / 550, t: '864 213;539 306;279 969;408 975;325 1134;179 399 v;265 294 v;402 294 v;488 174 v;160 711 v' }
];

const px = (b, x) => Math.round(b.ox + x / b.sx);
const py = y => Math.round(145 + y / 3);
let out = `<defs><radialGradient id="shade" r=".75"><stop offset="0" stop-color="#fff" stop-opacity=".06"/><stop offset="1" stop-color="#000" stop-opacity=".07"/></radialGradient>
<pattern id="tiny" width="2" height="2" patternUnits="userSpaceOnUse"><path d="M0 0h1v1H0zM1 1h1v1H1z" fill="#000" shape-rendering="crispEdges"/></pattern></defs>
<rect class="cell" x="505" y="150" width="1405" height="427" fill="#000"/>`;

function cell(x1, y1, x2, y2, color) {
  const w = x2 - x1, h = y2 - y1, [hi, lo] = bevel(color);
  out += `<rect class="cell" x="${x1}" y="${y1}" width="${w}" height="${h}" fill="${color}"/>`;
  if (w > 12 && h > 12) out += `<rect class="cell-shade" x="${x1}" y="${y1}" width="${w}" height="${h}" fill="url(#shade)"/>`;
  out += `<path class="edge" stroke="${lo}" d="M${x1} ${y2 - .5}H${x2 - .5}V${y1}"/><path class="edge" stroke="${hi}" d="M${x1 + .5} ${y2}V${y1 + .5}H${x2}"/>`;
}

// The chain of single callees that wraps the interpreter loop.
['#b5b55c', '#3cc118', '#1cc121', '#c1a04c', '#4cb8a0', '#6a8ec1', '#c1c180', '#2cc132', '#4cc120', '#c1681a'].forEach((c, i) => {
  const right = 1909 - 2 * i, top = 151 + 2 * i, h = 425 - 5 * i;
  cell(506 + 2 * i, top, right, top + h, c);
  if (i) out += `<rect class="cell" x="${right - 1}" y="${top + 1}" width="1" height="${h - 2}" fill="${c}"/><rect x="${right - 1}" y="${top + 1}" width="1" height="${h - 2}" fill="url(#tiny)"/>`;
});

blocks.forEach(b => b.cells.split(';').forEach(s => {
  const [x1, y1, x2, y2, k] = s.trim().split(' ');
  const a = px(b, x1), c = py(y1), d = px(b, x2), e = py(y2);
  if (k === '#') out += `<rect x="${a}" y="${c}" width="${d - a}" height="${e - c}" fill="url(#tiny)"/>`;
  else cell(a, c, d, e, palette[k]);
}));
labels.forEach(b => b.t.split(';').forEach(s => {
  const m = s.match(/^(\S+) (\S+) (?:(vw|v|w) )?(.+)$/);
  const x = b.ox + m[1] / b.sx, y = 145 + m[2] / 3, f = m[3] || '';
  out += `<text class="label${f.includes('w') ? ' light' : ''}" ${f[0] === 'v' ? `transform="translate(${x.toFixed(1)} ${y.toFixed(1)}) rotate(-90)"` : `x="${x.toFixed(1)}" y="${y.toFixed(1)}"`}>${m[4]}</text>`;
}));
meters.forEach(b => b.t.split(';').forEach(s => {
  const [mx, my, v] = s.split(' '), x = px(b, mx), y = py(my), w = v ? 10 : 25, h = v ? 25 : 10;
  out += `<rect class="meter" x="${x + .5}" y="${y + .5}" width="${w - 1}" height="${h - 1}"/>`;
  out += v ? `<rect class="meter-value" x="${x + 1}" y="${y + h - 2}" width="${w - 2}" height="1"/>` : `<rect class="meter-value" x="${x + 1}" y="${y + 1}" width="1" height="${h - 2}"/>`;
}));
document.getElementById('map').innerHTML = out;
```
